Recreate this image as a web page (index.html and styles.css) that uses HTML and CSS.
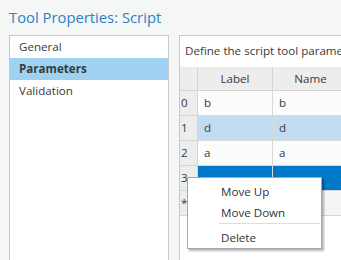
FILE: index.html
```html
<!DOCTYPE html>
<html>
<head>
<meta charset="utf-8">
<link rel="stylesheet" href="styles.css">
</head>
<body>
<div class="page">
  <h1 class="title">Tool Properties: Script</h1>
  <div class="main">
    <div class="nav">
      <div class="nav-item">General</div>
      <div class="nav-item selected">Parameters</div>
      <div class="nav-item">Validation</div>
    </div>
    <div class="content">
      <div class="desc">Define the script tool parameters, their properties and behavior.</div>
      <div class="grid">
        <div class="hdr corner"></div>
        <div class="hdr col">Label</div>
        <div class="hdr col">Name</div>
        <div class="hdr col">Data Type</div>

        <div class="rh">0</div>
        <div class="cell">b</div>
        <div class="cell">b</div>
        <div class="cell"></div>

        <div class="rh">1</div>
        <div class="cell sel">d</div>
        <div class="cell sel">d</div>
        <div class="cell sel"></div>

        <div class="rh">2</div>
        <div class="cell">a</div>
        <div class="cell">a</div>
        <div class="cell"></div>

        <div class="rh">3</div>
        <div class="cell active"></div>
        <div class="cell active"></div>
        <div class="cell active"></div>

        <div class="rh">*</div>
        <div class="cell new"></div>
        <div class="cell new"></div>
        <div class="cell new"></div>
      </div>
    </div>
  </div>
  <div class="menu">
    <div class="menu-item">Move Up</div>
    <div class="menu-item">Move Down</div>
    <div class="menu-sep"></div>
    <div class="menu-item">Delete</div>
  </div>
</div>
</body>
</html>
```

FILE: styles.css
```css
html, body {
  margin: 0;
  padding: 0;
  width: 341px;
  height: 260px;
  overflow: hidden;
  background: #f5f7f6;
  font-family: "Open Sans", "Noto Sans", sans-serif;
  color: #3a3a3a;
}
.page {
  position: relative;
  width: 341px;
  height: 260px;
  overflow: hidden;
}
.title {
  margin: 0;
  padding: 4px 0 0 9px;
  height: 35px;
  box-sizing: border-box;
  font-size: 14.8px;
  font-weight: 400;
  color: #2b7fc6;
  line-height: 26px;
}
.main {
  display: flex;
  gap: 10px;
  padding-left: 9px;
}
.nav {
  flex: 0 0 160px;
  height: 226px;
  box-sizing: border-box;
  background: #fff;
  border: 1px solid #c8c8c8;
  border-bottom: none;
}
.nav-item {
  height: 22px;
  line-height: 22px;
  padding-left: 9px;
  font-size: 11.6px;
}
.nav-item.selected {
  background: #9fd2f2;
  font-weight: 700;
}
.content {
  flex: 1 1 auto;
  height: 226px;
  box-sizing: border-box;
  background: #fff;
  border: 1px solid #c8c8c8;
  border-right: none;
  border-bottom: none;
  overflow: hidden;
}
.desc {
  height: 31px;
  line-height: 30px;
  padding-left: 5px;
  font-size: 11.6px;
  white-space: nowrap;
  overflow: hidden;
}
.grid {
  display: grid;
  grid-template-columns: 18px 75px 76px 120px;
  grid-template-rows: 24px repeat(5, 25px);
  font-size: 11.6px;
}
.hdr {
  background: #ededed;
  border-right: 1px solid #d4d4d4;
  border-bottom: 1px solid #d4d4d4;
  line-height: 23px;
}
.hdr.col {
  text-align: center;
}
.rh {
  background: #ededed;
  border-right: 1px solid #d4d4d4;
  border-bottom: 1px solid #d4d4d4;
  line-height: 24px;
  padding-left: 1px;
}
.cell {
  background: #fcfcfc;
  border-right: 1px solid #d8d8d8;
  border-bottom: 1px solid #d8d8d8;
  line-height: 24px;
  padding-left: 6px;
}
.cell.sel {
  background: #c3dcf1;
}
.cell.active {
  background: #0078c8;
}
.cell.new {
  background: #f4f5f5;
}
.menu {
  position: absolute;
  left: 187px;
  top: 177px;
  width: 135px;
  box-sizing: border-box;
  background: #fff;
  border: 1px solid #a8a8a8;
  box-shadow: 2px 2px 2px rgba(0, 0, 0, 0.3);
  padding: 3px 0 0 0;
  font-size: 11.6px;
}
.menu-item {
  height: 21px;
  line-height: 21px;
  padding-left: 33px;
  color: #333;
}
.menu-sep {
  height: 1px;
  margin: 0 1px 3px 31px;
  background: #dedede;
}
```
